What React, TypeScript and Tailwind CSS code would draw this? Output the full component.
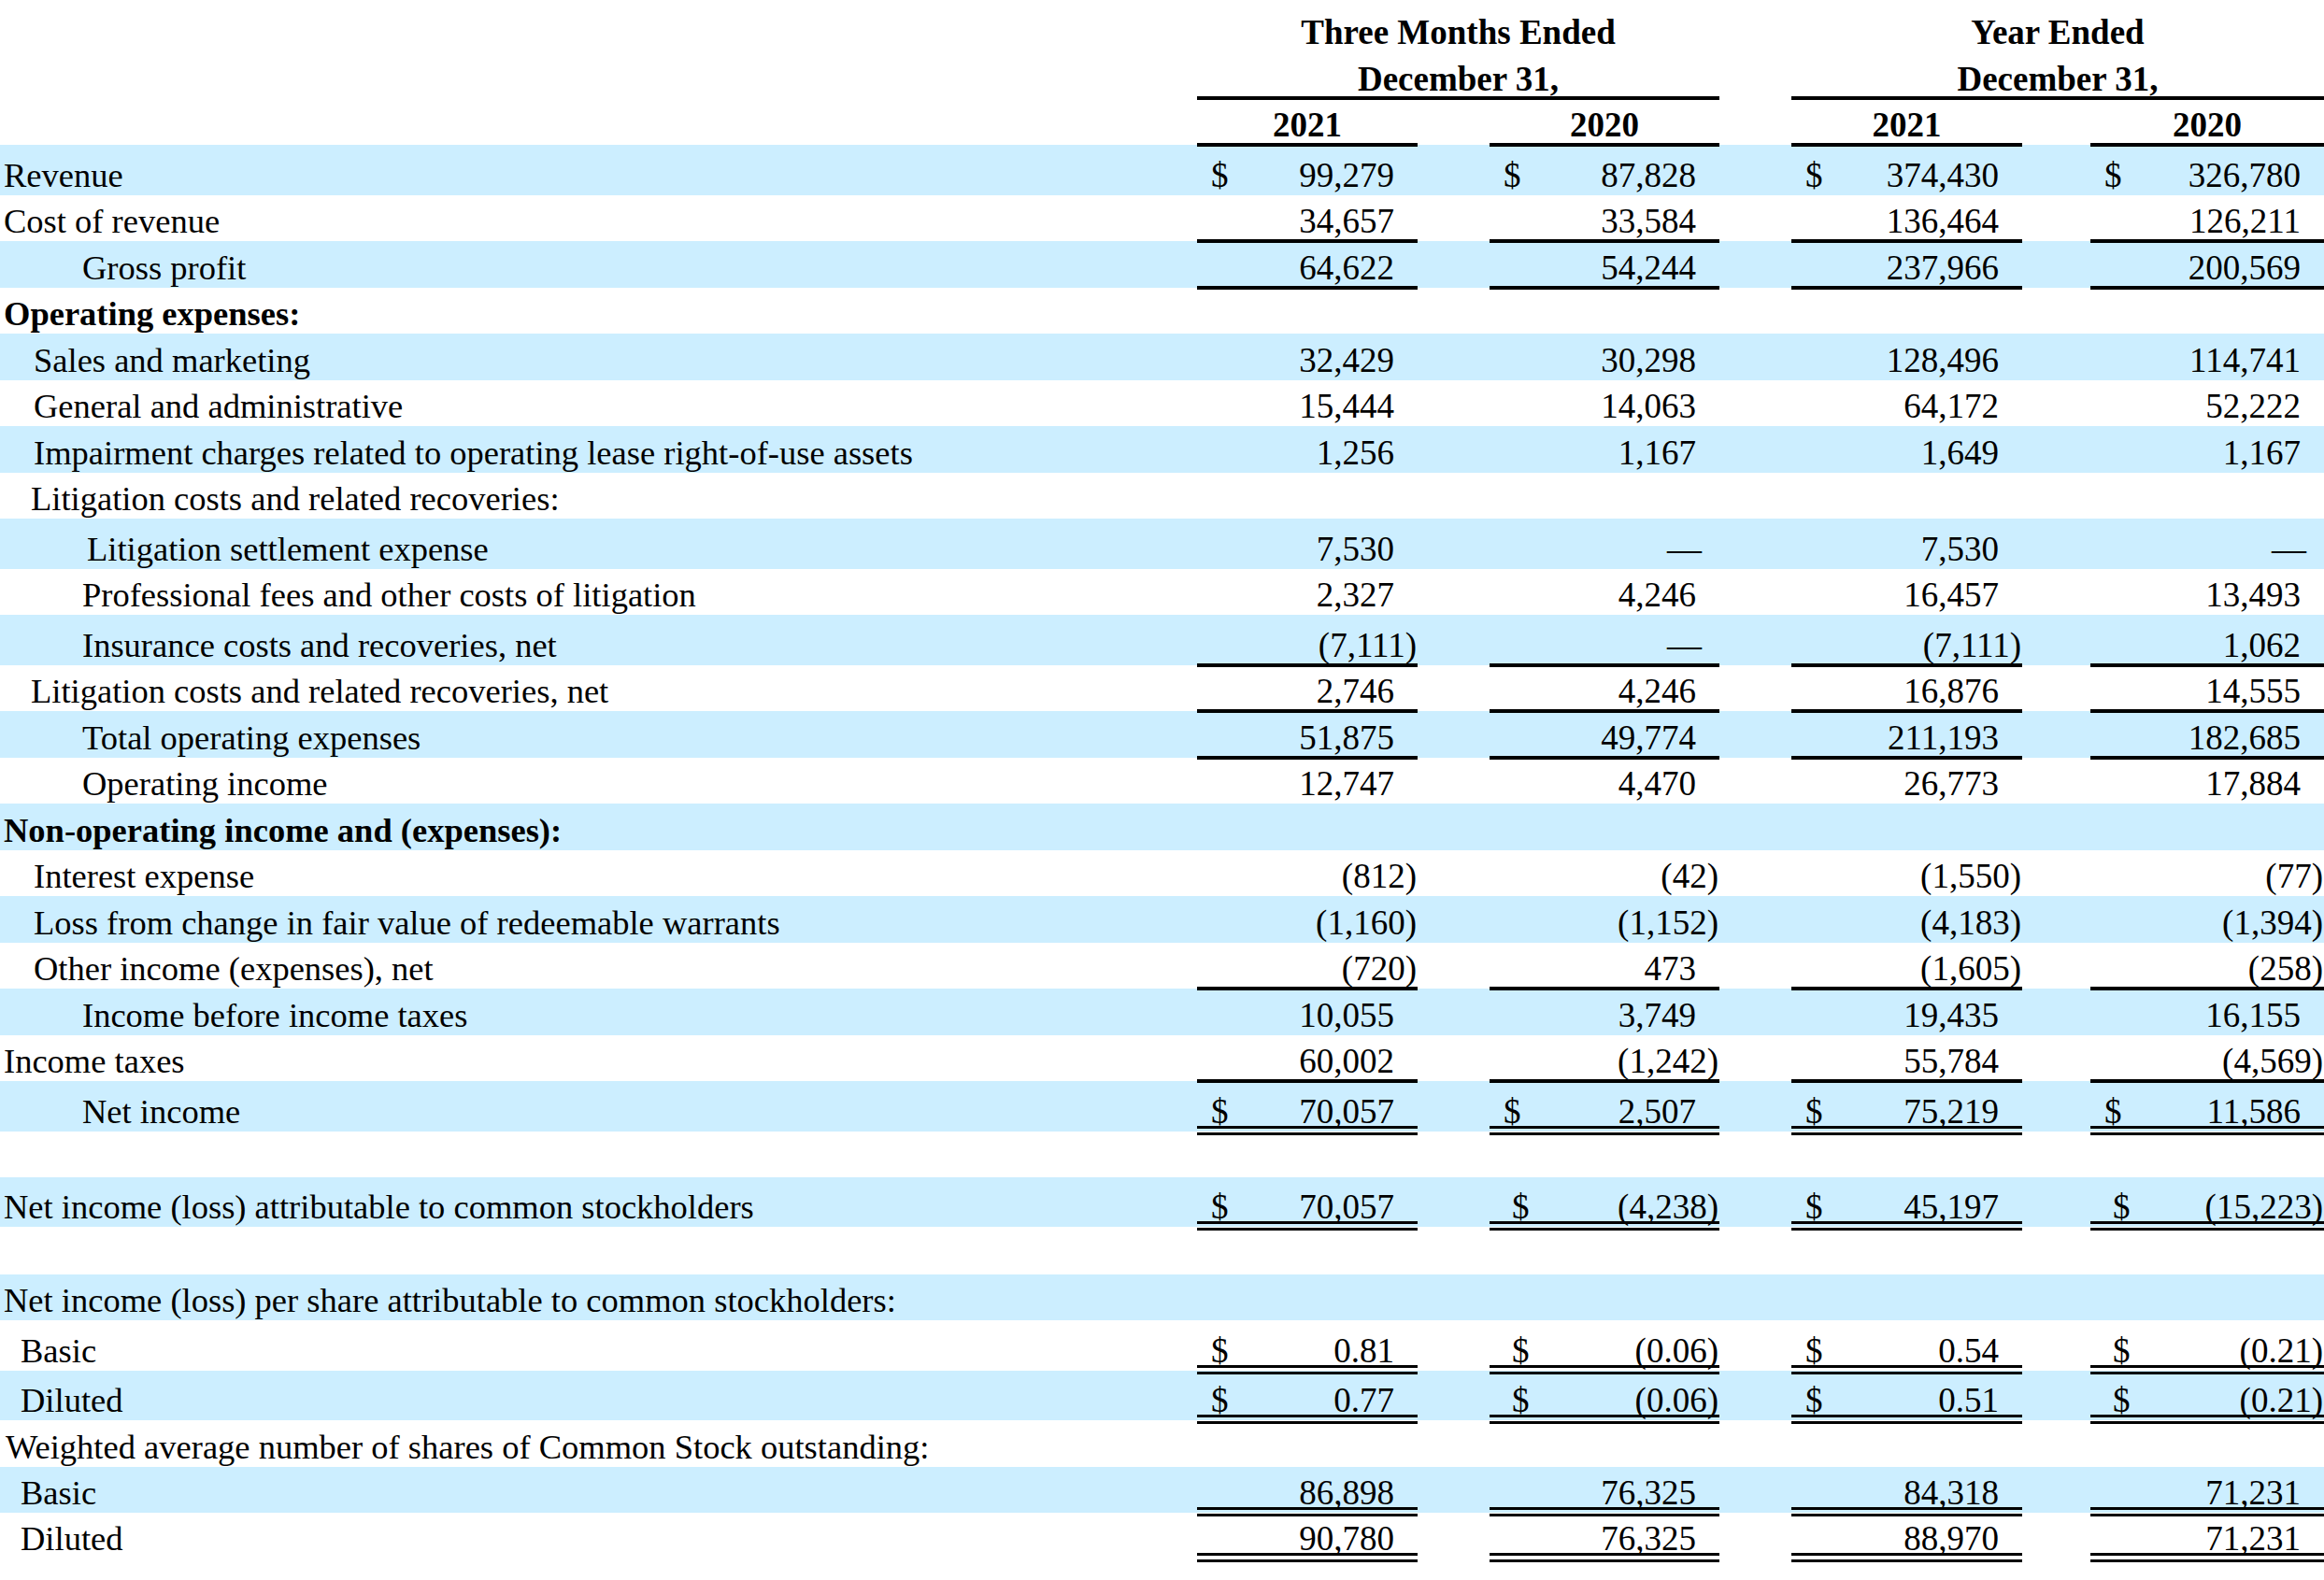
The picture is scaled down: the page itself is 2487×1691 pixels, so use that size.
import React from 'react';
import clsx from 'clsx';

type Line = 'single' | 'double' | undefined;

type Row = {
  label: string;
  indent?: string;
  bold?: boolean;
  h: number;
  vals?: string[];
  dollar?: boolean;
  line?: Line;
};

const HEIGHTS: Record<number, string> = {
  49: 'h-[49px]',
  50: 'h-[50px]',
  51: 'h-[51px]',
  53: 'h-[53px]',
  54: 'h-[54px]',
};

const COLS = ['w-[236px]', 'w-[246px]', 'w-[247px]', 'w-[250px]'];
const GAPS = ['w-[77px]', 'w-[77px]', 'w-[73px]'];

const ROWS: Row[] = [
  { label: 'Revenue', h: 54, vals: ['99,279', '87,828', '374,430', '326,780'], dollar: true },
  { label: 'Cost of revenue', h: 49, vals: ['34,657', '33,584', '136,464', '126,211'], line: 'single' },
  { label: 'Gross profit', indent: 'pl-[88px]', h: 50, vals: ['64,622', '54,244', '237,966', '200,569'], line: 'single' },
  { label: 'Operating expenses:', bold: true, h: 49 },
  { label: 'Sales and marketing', indent: 'pl-[36px]', h: 50, vals: ['32,429', '30,298', '128,496', '114,741'] },
  { label: 'General and administrative', indent: 'pl-[36px]', h: 49, vals: ['15,444', '14,063', '64,172', '52,222'] },
  { label: 'Impairment charges related to operating lease right-of-use assets', indent: 'pl-[36px]', h: 50, vals: ['1,256', '1,167', '1,649', '1,167'] },
  { label: 'Litigation costs and related recoveries:', indent: 'pl-[33px]', h: 49 },
  { label: 'Litigation settlement expense', indent: 'pl-[93px]', h: 54, vals: ['7,530', '—', '7,530', '—'] },
  { label: 'Professional fees and other costs of litigation', indent: 'pl-[88px]', h: 49, vals: ['2,327', '4,246', '16,457', '13,493'] },
  { label: 'Insurance costs and recoveries, net', indent: 'pl-[88px]', h: 54, vals: ['(7,111)', '—', '(7,111)', '1,062'], line: 'single' },
  { label: 'Litigation costs and related recoveries, net', indent: 'pl-[33px]', h: 49, vals: ['2,746', '4,246', '16,876', '14,555'], line: 'single' },
  { label: 'Total operating expenses', indent: 'pl-[88px]', h: 50, vals: ['51,875', '49,774', '211,193', '182,685'], line: 'single' },
  { label: 'Operating income', indent: 'pl-[88px]', h: 49, vals: ['12,747', '4,470', '26,773', '17,884'] },
  { label: 'Non-operating income and (expenses):', bold: true, h: 50 },
  { label: 'Interest expense', indent: 'pl-[36px]', h: 49, vals: ['(812)', '(42)', '(1,550)', '(77)'] },
  { label: 'Loss from change in fair value of redeemable warrants', indent: 'pl-[36px]', h: 50, vals: ['(1,160)', '(1,152)', '(4,183)', '(1,394)'] },
  { label: 'Other income (expenses), net', indent: 'pl-[36px]', h: 49, vals: ['(720)', '473', '(1,605)', '(258)'], line: 'single' },
  { label: 'Income before income taxes', indent: 'pl-[88px]', h: 50, vals: ['10,055', '3,749', '19,435', '16,155'] },
  { label: 'Income taxes', h: 49, vals: ['60,002', '(1,242)', '55,784', '(4,569)'], line: 'single' },
  { label: 'Net income', indent: 'pl-[88px]', h: 54, vals: ['70,057', '2,507', '75,219', '11,586'], dollar: true, line: 'double' },
  { label: '', h: 49 },
  { label: 'Net income (loss) attributable to common stockholders', h: 53, vals: ['70,057', '(4,238)', '45,197', '(15,223)'], dollar: true, line: 'double' },
  { label: '', h: 51 },
  { label: 'Net income (loss) per share attributable to common stockholders:', h: 49 },
  { label: 'Basic', indent: 'pl-[22px]', h: 54, vals: ['0.81', '(0.06)', '0.54', '(0.21)'], dollar: true, line: 'double' },
  { label: 'Diluted', indent: 'pl-[22px]', h: 53, vals: ['0.77', '(0.06)', '0.51', '(0.21)'], dollar: true, line: 'double' },
  { label: 'Weighted average number of shares of Common Stock outstanding:', indent: 'pl-[6px]', h: 50 },
  { label: 'Basic', indent: 'pl-[22px]', h: 49, vals: ['86,898', '76,325', '84,318', '71,231'], line: 'double' },
  { label: 'Diluted', indent: 'pl-[22px]', h: 49, vals: ['90,780', '76,325', '88,970', '71,231'], line: 'double' },
];

function Rule({ line }: { line: Line }) {
  if (line === 'single') return <div className="relative -mt-[2px] h-[4px] bg-black" />;
  if (line === 'double')
    return (
      <>
        <div className="relative -mt-[6px] h-[3px] bg-black" />
        <div className="h-[4px]" />
        <div className="relative h-[3px] bg-black" />
      </>
    );
  return null;
}

function Cell({ width, h, value, dollar, line }: { width: string; h: string; value?: string; dollar?: boolean; line: Line }) {
  const paren = !!value && value.endsWith(')');
  const dash = value === '—';
  return (
    <div className={clsx('flex shrink-0 flex-col', width)}>
      <div className={clsx('flex items-end justify-between pb-[3px]', h)}>
        <span className={paren ? 'pl-[24px]' : 'pl-[15px]'}>{dollar ? '$' : ''}</span>
        <span className={paren ? 'pr-[1px]' : dash ? 'pr-[19px]' : 'pr-[25px]'}>{value}</span>
      </div>
      {value !== undefined && <Rule line={line} />}
    </div>
  );
}

function TableRow({ row, shaded }: { row: Row; shaded: boolean }) {
  const h = HEIGHTS[row.h];
  return (
    <div className={clsx('flex items-start', h, shaded && 'bg-[#cceeff]')}>
      <div
        className={clsx(
          'flex w-[1281px] shrink-0 items-end pb-[3px] text-[36.5px]',
          h,
          row.indent ?? 'pl-[4px]',
          row.bold && 'font-bold'
        )}
      >
        {row.label}
      </div>
      {COLS.map((w, i) => (
        <React.Fragment key={i}>
          <Cell width={w} h={h} value={row.vals?.[i]} dollar={row.dollar} line={row.line} />
          {i < 3 && <div className={clsx('shrink-0', GAPS[i])} />}
        </React.Fragment>
      ))}
    </div>
  );
}

function Header() {
  return (
    <div className="font-bold">
      <div className="flex h-[53px] items-end">
        <div className="w-[1281px] shrink-0" />
        <div className="w-[559px] shrink-0 text-center">Three Months Ended</div>
        <div className="w-[77px] shrink-0" />
        <div className="w-[570px] shrink-0 text-center">Year Ended</div>
      </div>
      <div className="flex h-[52px] items-start">
        <div className="w-[1281px] shrink-0" />
        <div className="flex w-[559px] shrink-0 flex-col">
          <div className="flex h-[52px] items-end justify-center pb-[2px]">December 31,</div>
          <div className="relative -mt-[2px] h-[4px] bg-black" />
        </div>
        <div className="w-[77px] shrink-0" />
        <div className="flex w-[570px] shrink-0 flex-col">
          <div className="flex h-[52px] items-end justify-center pb-[2px]">December 31,</div>
          <div className="relative -mt-[2px] h-[4px] bg-black" />
        </div>
      </div>
      <div className="flex h-[50px] items-start">
        <div className="w-[1281px] shrink-0" />
        {['2021', '2020', '2021', '2020'].map((y, i) => (
          <React.Fragment key={i}>
            <div className={clsx('flex shrink-0 flex-col', COLS[i])}>
              <div className="flex h-[50px] items-end justify-center pb-[3px]">{y}</div>
              <div className="relative z-10 -mt-[2px] h-[4px] bg-black" />
            </div>
            {i < 3 && <div className={clsx('shrink-0', GAPS[i])} />}
          </React.Fragment>
        ))}
      </div>
    </div>
  );
}

export default function App() {
  return (
    <div className="h-[1691px] w-[2487px] overflow-hidden bg-white font-['Liberation_Serif','Times_New_Roman',serif] text-[37px] leading-none text-black">
      <Header />
      {ROWS.map((row, i) => (
        <TableRow key={i} row={row} shaded={i % 2 === 0} />
      ))}
    </div>
  );
}
